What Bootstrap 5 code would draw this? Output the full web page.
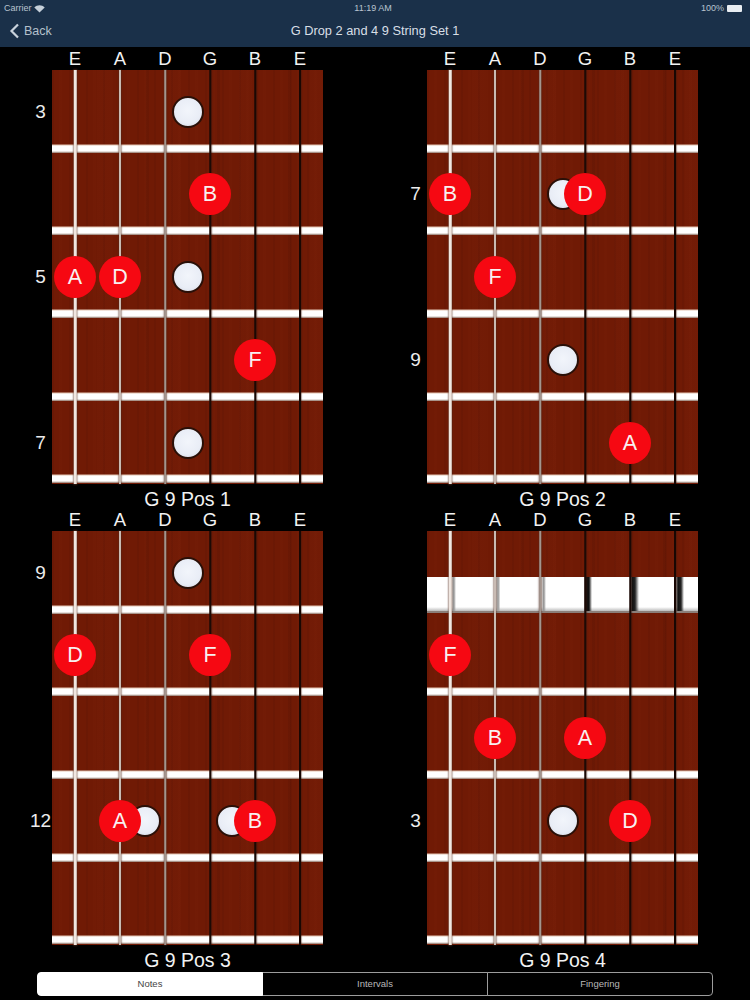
<!DOCTYPE html>
<html lang="en">
<head>
<meta charset="utf-8">
<title>G Drop 2 and 4 9 String Set 1</title>
<link href="https://cdn.jsdelivr.net/npm/bootstrap@5.3.0/dist/css/bootstrap.min.css" rel="stylesheet">
<style>
html,body{background:#000;height:1000px;overflow:hidden}
body{font-family:"Liberation Sans",Arial,sans-serif;color:#fff;width:750px}
.app-head{height:47px;background:#1a3049;color:#d5dde6}
.stat-line{height:16px;font-size:9px;line-height:16px;padding:0 8px 0 4px;color:#b9c4cf}
.stat-line>*{flex:1 1 0}
.title-line{height:31px;font-size:12.8px;line-height:30px;position:relative}
.back-link{color:#b4c0cc;font-size:12.5px;padding-left:9px;text-decoration:none;position:relative;z-index:1}
.head-title{position:absolute;left:0;right:0;top:0;text-align:center;color:#d8dfe6}
.batt{display:inline-block;width:15px;height:7px;background:#e8edf2;border-radius:1px;margin-left:3px;vertical-align:-1px}
.pane{padding-left:52px;width:375px}
.strnames{display:flex;width:271px;height:23px;padding-left:.5px;font-size:18.5px;line-height:24px;color:#f2f2f2}
.strnames span{width:45px;text-align:center}
.board{position:relative;width:271px;height:413.5px;display:grid;grid-template-rows:repeat(5,1fr);
 background-color:#701a05;
 background-image:
  repeating-linear-gradient(90deg,rgba(40,5,0,.07) 0 2px,transparent 2px 7px,rgba(150,50,20,.05) 7px 10px,transparent 10px 17px),
  repeating-linear-gradient(90deg,transparent 0 23px,rgba(30,5,0,.08) 23px 26px,transparent 26px 45px,rgba(150,50,25,.06) 45px 58px,transparent 58px 71px);
}
.fcell{background:linear-gradient(180deg,rgba(110,30,10,0) 0,#e2c4b2 1px,#fff 2px,#fff 6.5px,#d8cfca 8px,#7a5a4c 9px,rgba(90,20,5,.6) 10px) 0 100%/100% 10px no-repeat;background-position:0 calc(100% + 1px)}
.nutcell{display:flex;align-items:flex-end;padding-bottom:1px}
.nutbar{width:100%;height:36px;border-bottom:2px solid #8b7f7a;
 background-color:#fff;
 background-image:
  linear-gradient(90deg,transparent 25px,#9a9a9a 26px,#9a9a9a 27px,transparent 29px),
  linear-gradient(90deg,transparent 69px,#aaa 70px,#aaa 72px,transparent 73px),
  linear-gradient(90deg,transparent 115px,#999 116px,#999 117px,transparent 119px),
  linear-gradient(90deg,transparent 157px,#111 159px,#111 162px,transparent 165px),
  linear-gradient(90deg,transparent 203px,#111 205px,#222 208px,transparent 212px),
  linear-gradient(90deg,transparent 248px,#111 251px,#222 254px,transparent 257px),
  linear-gradient(180deg,transparent 30px,#999 36px)}
.gstr{position:absolute;top:0;bottom:0;transform:translateX(-50%);z-index:1}
.g1{left:23px;width:2.5px;background:#f0e6e0;box-shadow:0 0 1.5px 1px rgba(80,40,25,.7)}
.g2{left:68px;width:2px;background:#c9bbb3;box-shadow:0 0 1.5px .5px rgba(80,40,25,.7)}
.g3{left:113px;width:1.5px;background:#a3958e;box-shadow:0 0 1.5px .5px rgba(80,40,25,.7)}
.g4{left:158px;width:1.5px;background:#1c0a05;box-shadow:1px 0 1px rgba(60,25,15,.4)}
.g5{left:203px;width:1.5px;background:#1a0804;box-shadow:1px 0 1px rgba(60,25,15,.4)}
.g6{left:248px;width:2px;background:#180703;box-shadow:1px 0 1px rgba(60,25,15,.4)}
.inlay,.pin,.fnum{position:absolute;transform:translate(-50%,-50%)}
.inlay{width:32px;height:32px;border-radius:50%;z-index:2;border:2px solid #2a1008;
 background:radial-gradient(circle at 50% 45%,#f2f5fb 0,#e9edf6 60%,#cfd5e2 100%)}
.pin{width:42px;height:42px;border-radius:50%;z-index:3;background:#f60812;color:#f8f0f0;
 font-size:21.5px;line-height:42px;text-align:center}
.r1{top:42px}.r2{top:124px}.r3{top:207px}.r4{top:290px}.r5{top:373px}
.at1{left:23px}.at2{left:68px}.at3{left:113px}.at4{left:158px}.at5{left:203px}.at6{left:248px}
.dot-a{left:93px}.dot-b{left:136px}.dot-c{left:180px}
.fnum{left:-11.5px;font-size:19px;line-height:22px;color:#ececec;white-space:nowrap}
.pos-name{width:271px;text-align:center;font-size:19.5px;line-height:22px;height:24.5px;padding-top:4.5px;color:#f2f2f2}
.seg-wrap{position:absolute;left:37px;top:972px;width:676px;height:24px}
.seg-wrap .btn{flex:1 1 0;padding:0;font-size:9.5px;line-height:22px;height:24px;color:#b8b8b8;background:#000;border:1px solid #9c9c9c;font-family:inherit}
.seg-wrap .btn:first-child{border-radius:4px 0 0 4px}
.seg-wrap .btn:last-child{border-radius:0 4px 4px 0}
.seg-wrap .btn.active{background:#fff;color:#444;border-color:#fff}
</style>
</head>
<body>
<header class="app-head">
  <div class="stat-line d-flex align-items-center">
    <div>Carrier
      <svg width="11" height="8" viewBox="0 0 11 8"><path d="M5.5 7.6 L0.3 2.4 C3.2 -0.4 7.8 -0.4 10.7 2.4 Z" fill="#c6d0da"/></svg>
    </div>
    <div class="text-center">11:19 AM</div>
    <div class="text-end">100%<span class="batt"></span></div>
  </div>
  <div class="title-line">
    <a class="back-link d-inline-flex align-items-center gap-1" href="#">
      <svg width="11" height="16" viewBox="0 0 11 16"><path d="M9 1.5 L2.5 8 L9 14.5" fill="none" stroke="#c9d3dd" stroke-width="2.2"/></svg>Back
    </a>
    <div class="head-title">G Drop 2 and 4 9 String Set 1</div>
  </div>
</header>

<main class="row g-0">
  <section class="col-6 pane">
    <div class="strnames"><span>E</span><span>A</span><span>D</span><span>G</span><span>B</span><span>E</span></div>
    <div class="board">
      <div class="fcell"></div><div class="fcell"></div><div class="fcell"></div><div class="fcell"></div><div class="fcell"></div>
      <i class="gstr g1"></i><i class="gstr g2"></i><i class="gstr g3"></i><i class="gstr g4"></i><i class="gstr g5"></i><i class="gstr g6"></i>
      <span class="fnum r1">3</span><span class="fnum r3">5</span><span class="fnum r5">7</span>
      <i class="inlay dot-b r1"></i><i class="inlay dot-b r3"></i><i class="inlay dot-b r5"></i>
      <span class="pin at4 r2">B</span><span class="pin at1 r3">A</span><span class="pin at2 r3">D</span><span class="pin at5 r4">F</span>
    </div>
    <div class="pos-name">G 9 Pos 1</div>
  </section>
  <section class="col-6 pane">
    <div class="strnames"><span>E</span><span>A</span><span>D</span><span>G</span><span>B</span><span>E</span></div>
    <div class="board">
      <div class="fcell"></div><div class="fcell"></div><div class="fcell"></div><div class="fcell"></div><div class="fcell"></div>
      <i class="gstr g1"></i><i class="gstr g2"></i><i class="gstr g3"></i><i class="gstr g4"></i><i class="gstr g5"></i><i class="gstr g6"></i>
      <span class="fnum r2">7</span><span class="fnum r4">9</span>
      <i class="inlay dot-b r2"></i><i class="inlay dot-b r4"></i>
      <span class="pin at1 r2">B</span><span class="pin at4 r2">D</span><span class="pin at2 r3">F</span><span class="pin at5 r5">A</span>
    </div>
    <div class="pos-name">G 9 Pos 2</div>
  </section>
  <section class="col-6 pane">
    <div class="strnames"><span>E</span><span>A</span><span>D</span><span>G</span><span>B</span><span>E</span></div>
    <div class="board">
      <div class="fcell"></div><div class="fcell"></div><div class="fcell"></div><div class="fcell"></div><div class="fcell"></div>
      <i class="gstr g1"></i><i class="gstr g2"></i><i class="gstr g3"></i><i class="gstr g4"></i><i class="gstr g5"></i><i class="gstr g6"></i>
      <span class="fnum r1">9</span><span class="fnum r4">12</span>
      <i class="inlay dot-b r1"></i><i class="inlay dot-a r4"></i><i class="inlay dot-c r4"></i>
      <span class="pin at1 r2">D</span><span class="pin at4 r2">F</span><span class="pin at2 r4">A</span><span class="pin at5 r4">B</span>
    </div>
    <div class="pos-name">G 9 Pos 3</div>
  </section>
  <section class="col-6 pane">
    <div class="strnames"><span>E</span><span>A</span><span>D</span><span>G</span><span>B</span><span>E</span></div>
    <div class="board">
      <div class="nutcell"><div class="nutbar"></div></div><div class="fcell"></div><div class="fcell"></div><div class="fcell"></div><div class="fcell"></div>
      <i class="gstr g1"></i><i class="gstr g2"></i><i class="gstr g3"></i><i class="gstr g4"></i><i class="gstr g5"></i><i class="gstr g6"></i>
      <span class="fnum r4">3</span>
      <i class="inlay dot-b r4"></i>
      <span class="pin at1 r2">F</span><span class="pin at2 r3">B</span><span class="pin at4 r3">A</span><span class="pin at5 r4">D</span>
    </div>
    <div class="pos-name">G 9 Pos 4</div>
  </section>
</main>

<div class="btn-group seg-wrap d-flex" role="group" aria-label="View">
  <button type="button" class="btn active">Notes</button>
  <button type="button" class="btn">Intervals</button>
  <button type="button" class="btn">Fingering</button>
</div>
<script src="https://cdn.jsdelivr.net/npm/bootstrap@5.3.0/dist/js/bootstrap.bundle.min.js"></script>
</body>
</html>
